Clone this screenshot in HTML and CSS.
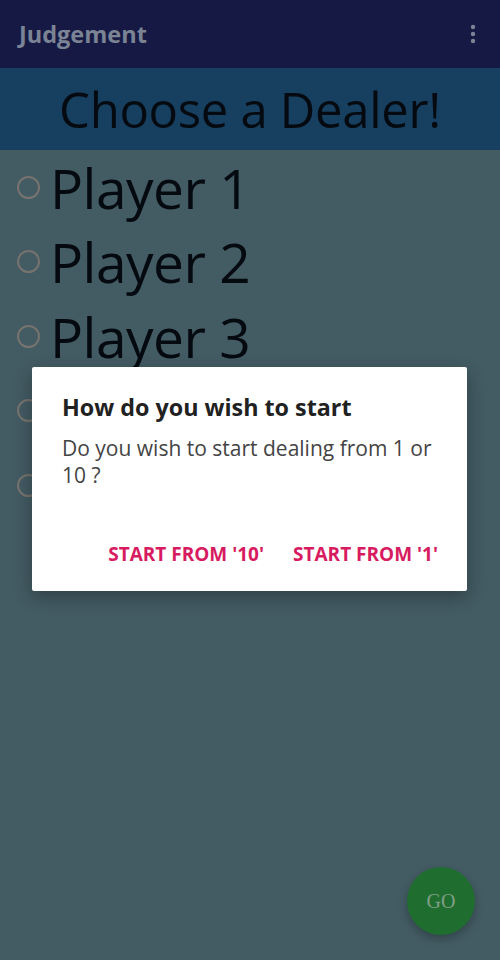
FILE: index.html
```html
<!DOCTYPE html>
<html>
<head>
<meta charset="utf-8">
<link rel="stylesheet" href="styles.css">
</head>
<body>
<div class="screen">
  <header class="toolbar">
    <span class="app-title">Judgement</span>
    <svg class="menu" width="6" height="20" viewBox="0 0 6 20"><circle cx="3" cy="3" r="2.2"/><circle cx="3" cy="10" r="2.2"/><circle cx="3" cy="17" r="2.2"/></svg>
  </header>
  <div class="banner">Choose a Dealer!</div>
  <ul class="players">
    <li class="player"><span class="radio"></span><span class="pname">Player 1</span></li>
    <li class="player"><span class="radio"></span><span class="pname">Player 2</span></li>
    <li class="player"><span class="radio"></span><span class="pname">Player 3</span></li>
    <li class="player"><span class="radio"></span><span class="pname">Player 4</span></li>
    <li class="player"><span class="radio"></span><span class="pname">Player 5</span></li>
  </ul>
  <button class="fab">GO</button>
  <div class="dialog">
    <h2 class="d-title">How do you wish to start</h2>
    <p class="d-msg">Do you wish to start dealing from 1 or 10 ?</p>
    <div class="d-actions">
      <span class="d-btn">START FROM '10'</span>
      <span class="d-btn">START FROM '1'</span>
    </div>
  </div>
</div>
</body>
</html>
```
FILE: styles.css
```css
html, body {
  margin: 0;
  padding: 0;
}
body {
  width: 500px;
  height: 960px;
  overflow: hidden;
  background: #435b63;
  font-family: "Open Sans", "Noto Sans", sans-serif;
}
.screen {
  position: relative;
  width: 500px;
  height: 960px;
  background: #435b63;
}
.toolbar {
  height: 68px;
  background: #161944;
  display: flex;
  align-items: center;
  justify-content: space-between;
  padding: 0 24px 0 19px;
  box-sizing: border-box;
}
.app-title {
  color: #7b8494;
  font-weight: 700;
  font-size: 23.5px;
  letter-spacing: 0;
}
.menu {
  fill: #7b8494;
}
.banner {
  height: 82px;
  background: #173f5f;
  color: #050a10;
  font-size: 49px;
  line-height: 82px;
  text-align: center;
  letter-spacing: -0.3px;
}
.players {
  list-style: none;
  margin: 0;
  padding: 0;
}
.player {
  height: 74.5px;
  display: flex;
  align-items: center;
  padding-left: 17px;
}
.radio {
  width: 19px;
  height: 19px;
  border: 2px solid #77736f;
  border-radius: 50%;
  margin-right: 10px;
  flex: none;
}
.pname {
  font-size: 55px;
  color: #050a10;
  letter-spacing: -0.5px;
  line-height: 75px;
}
.fab {
  position: absolute;
  left: 407px;
  top: 867px;
  width: 68px;
  height: 68px;
  border-radius: 50%;
  border: none;
  background: #1f6e2f;
  color: #7f9e86;
  font-family: "Liberation Serif", serif;
  font-size: 20px;
  box-shadow: 0 4px 8px rgba(0,0,0,0.25);
}
.dialog {
  position: absolute;
  left: 32px;
  top: 367px;
  width: 435px;
  height: 224px;
  background: #ffffff;
  border-radius: 2px;
  box-shadow: 0 6px 18px rgba(0,0,0,0.3);
  box-sizing: border-box;
  padding: 24px 24px 0 30px;
}
.d-title {
  margin: 0;
  font-size: 23.3px;
  font-weight: 700;
  color: #212121;
  line-height: 32px;
  letter-spacing: 0;
}
.d-msg {
  margin: 12px 0 0 0;
  font-size: 21px;
  color: #444444;
  line-height: 27px;
  letter-spacing: 0;
}
.d-actions {
  display: flex;
  justify-content: flex-end;
  gap: 29px;
  margin-top: 53px;
  padding-right: 5px;
  line-height: 24px;
}
.d-btn {
  color: #d81b60;
  font-weight: 700;
  font-size: 19px;
  letter-spacing: 0;
}
```
